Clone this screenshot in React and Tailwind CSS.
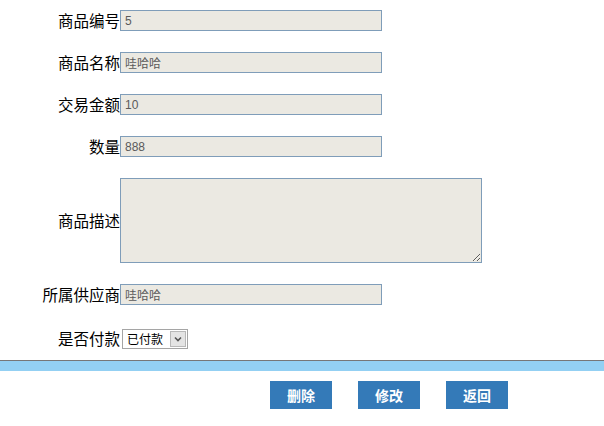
export default function App() {
  const font = { fontFamily: '"Noto Sans CJK SC", "Liberation Sans", sans-serif' };
  const inputFont = { fontFamily: '"Liberation Sans", "Noto Sans CJK SC", sans-serif' };

  const rows = [
    { label: "商品编号", value: "5" },
    { label: "商品名称", value: "哇哈哈" },
    { label: "交易金额", value: "10" },
    { label: "数量", value: "888" },
  ];

  return (
    <div className="w-[604px] h-[426px] bg-white overflow-hidden" style={font}>
      <div className="flex flex-col gap-[21px] pt-[10px]">
        {rows.map((r) => (
          <div key={r.label} className="flex items-center h-[21px]">
            <span className="w-[120px] text-right text-[15.5px] text-black leading-none">{r.label}</span>
            <input
              readOnly
              value={r.value}
              className="w-[262px] h-[21px] border border-[#7f9db9] bg-[#ebe9e2] px-[4px] text-[12px] text-[#5a5a5a] outline-none"
              style={inputFont}
            />
          </div>
        ))}

        <div className="flex items-center h-[85px]">
          <span className="w-[120px] text-right text-[15.5px] text-black leading-none">商品描述</span>
          <textarea
            readOnly
            className="w-[362px] h-[85px] border border-[#7f9db9] bg-[#ebe9e2] outline-none"
          />
        </div>

        <div className="flex items-center h-[21px]">
          <span className="w-[120px] text-right text-[15.5px] text-black leading-none">所属供应商</span>
          <input
            readOnly
            value="哇哈哈"
            className="w-[262px] h-[21px] border border-[#7f9db9] bg-[#ebe9e2] px-[4px] text-[12px] text-[#5a5a5a] outline-none"
            style={inputFont}
          />
        </div>

        <div className="flex items-center h-[22px] mt-[2px]">
          <span className="w-[120px] text-right text-[15.5px] text-black leading-none">是否付款</span>
          <div className="ml-[2px] flex items-center w-[66px] h-[20px] border border-[#a5a5a5] bg-white">
            <span className="flex-1 pl-[4px] text-[12px] text-black leading-none">已付款</span>
            <span className="w-[16px] h-[16px] mr-[1px] flex items-center justify-center bg-[#e4e4e4] border border-[#b8b8b8]">
              <svg width="8" height="6" viewBox="0 0 8 6">
                <path d="M1 1.5 L4 4.5 L7 1.5" fill="none" stroke="#555" strokeWidth="1.6" />
              </svg>
            </span>
          </div>
        </div>
      </div>

      <div className="mt-[10px] border-t border-[#777] h-[11px] bg-[#93d0f3]" />

      <div className="flex gap-[26px] pl-[270px] pt-[10px]">
        {["删除", "修改", "返回"].map((t) => (
          <button
            key={t}
            className="w-[62px] h-[28px] bg-[#347ab8] text-white text-[14px] font-bold flex items-center justify-center"
            style={font}
          >
            {t}
          </button>
        ))}
      </div>
    </div>
  );
}
